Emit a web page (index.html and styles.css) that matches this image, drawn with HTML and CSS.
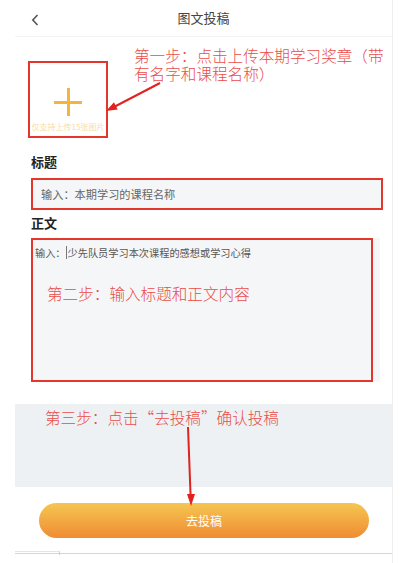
FILE: index.html
```html
<!DOCTYPE html>
<html>
<head>
    <meta charset="UTF-8">
    <meta name="viewport" content="width=device-width, initial-scale=1.0">
    <title>图文投稿</title>
    <link rel="stylesheet" href="styles.css">
</head>
<body>
    <div class="phone">
        <header>
            <span class="back">
                <svg width="8" height="12" viewBox="0 0 8 12"><path d="M6.5 1 L1.8 6 L6.5 11" fill="none" stroke="#555" stroke-width="1.6"/></svg>
            </span>
            <h1>图文投稿</h1>
        </header>

        <div class="upload-row">
            <div class="upload">
                <div class="plus"></div>
                <div class="upload-hint">仅支持上传15张图片</div>
            </div>
            <p class="note note-one">第一步：点击上传本期学习奖章（带有名字和课程名称）</p>
        </div>

        <div class="label label-title">标题</div>
        <div class="field field-title">输入：本期学习的课程名称</div>

        <div class="label label-body">正文</div>
        <div class="field field-body">
            <div class="body-text">输入：<span class="caret"></span>少先队员学习本次课程的感想或学习心得</div>
            <p class="note note-two">第二步：输入标题和正文内容</p>
        </div>

        <div class="band">
            <p class="note note-three">第三步：点击“去投稿”确认投稿</p>
        </div>

        <button class="btn">去投稿</button>

        <div class="bottom-bar"><span class="tab"></span></div>
    </div>

    <svg class="arrows" width="404" height="563" viewBox="0 0 404 563">
        <line x1="160" y1="83" x2="113" y2="107.5" stroke="#e0231d" stroke-width="2"/>
        <polygon points="106,111 117.6,109.4 114,102.3" fill="#e0231d"/>
        <line x1="188" y1="427" x2="190.6" y2="496" stroke="#e0231d" stroke-width="2"/>
        <polygon points="191,506 187,494 195,494" fill="#e0231d"/>
    </svg>
</body>
</html>
```

FILE: styles.css
```css
body {
    margin: 0;
    padding: 0;
    background-color: #fff;
    font-family: "Noto Sans CJK SC", "Noto Sans", sans-serif;
    position: relative;
    height: 563px;
    overflow: hidden;
}
.phone {
    margin-left: 15px;
    width: 377px;
    height: 563px;
    border-right: 1px solid #eeeeee;
}
header {
    height: 36px;
    border-bottom: 1px solid #f4f4f4;
    position: relative;
    display: flex;
    align-items: center;
    justify-content: center;
}
header h1 {
    margin: 0;
    font-size: 13px;
    font-weight: normal;
    color: #444;
    line-height: 18px;
}
.back {
    position: absolute;
    left: 16px;
    top: 14px;
    display: flex;
}
.upload-row {
    display: flex;
    align-items: flex-start;
    padding: 9px 0 0 13px;
}
.upload {
    box-sizing: border-box;
    width: 80px;
    height: 77px;
    margin-top: 15px;
    border: 2px solid #e4372c;
    position: relative;
}
.plus {
    position: absolute;
    left: 24px;
    top: 25px;
    width: 28px;
    height: 28px;
}
.plus::before, .plus::after {
    content: "";
    position: absolute;
    background-color: #f5b53a;
}
.plus::before {
    left: 0;
    top: 12.5px;
    width: 28px;
    height: 3px;
}
.plus::after {
    left: 12.5px;
    top: 0;
    width: 3px;
    height: 28px;
}
.upload-hint {
    position: absolute;
    left: 0;
    right: 0;
    top: 59px;
    text-align: center;
    font-size: 8px;
    line-height: 10px;
    color: #f9dca6;
    white-space: nowrap;
}
.note {
    margin: 0;
    color: #ea4c48;
    font-size: 15.6px;
    font-weight: 300;
    line-height: 18px;
}
.note-one {
    margin-left: 26px;
    width: 254px;
}
.label {
    font-size: 13px;
    font-weight: bold;
    color: #222;
    line-height: 18px;
    padding-left: 16px;
}
.label-title {
    margin-top: 15px;
}
.label-body {
    margin-top: 4px;
}
.field {
    box-sizing: border-box;
    margin-left: 16px;
    background-color: #f5f6f8;
    border: 2px solid #e4372c;
}
.field-title {
    margin-top: 7px;
    width: 352px;
    height: 32px;
    padding-left: 8px;
    font-size: 11.2px;
    line-height: 28px;
    color: #666;
}
.field-body {
    margin-top: 6px;
    width: 342px;
    height: 144px;
    padding: 5px 0 0 2px;
    box-shadow: 7px 0 0 #f5f6f8;
}
.body-text {
    font-size: 10.2px;
    line-height: 16px;
    color: #555;
    white-space: nowrap;
}
.caret {
    display: inline-block;
    width: 1px;
    height: 13px;
    margin-right: 1px;
    vertical-align: -2px;
    background-color: #777;
}
.note-two {
    margin-top: 23px;
    margin-left: 12px;
}
.band {
    margin-top: 22px;
    height: 83px;
    box-sizing: border-box;
    padding: 4px 0 0 30px;
    background-color: #eef1f4;
}
.btn {
    display: block;
    margin: 16px 0 0 24px;
    width: 330px;
    height: 35px;
    border: none;
    border-radius: 18px;
    background: linear-gradient(#f5c652, #ef8c33);
    color: #fff;
    font-family: "Noto Sans CJK SC", sans-serif;
    font-size: 12px;
}
.bottom-bar {
    margin-top: 15px;
    height: 10px;
    border-top: 1px solid #d5d5d5;
    position: relative;
}
.tab {
    position: absolute;
    left: 0;
    top: -3px;
    width: 44px;
    height: 3px;
    border-top: 1px solid #dde6f2;
    border-right: 1px solid #ccc;
}
.arrows {
    position: absolute;
    left: 0;
    top: 0;
    pointer-events: none;
}
```
